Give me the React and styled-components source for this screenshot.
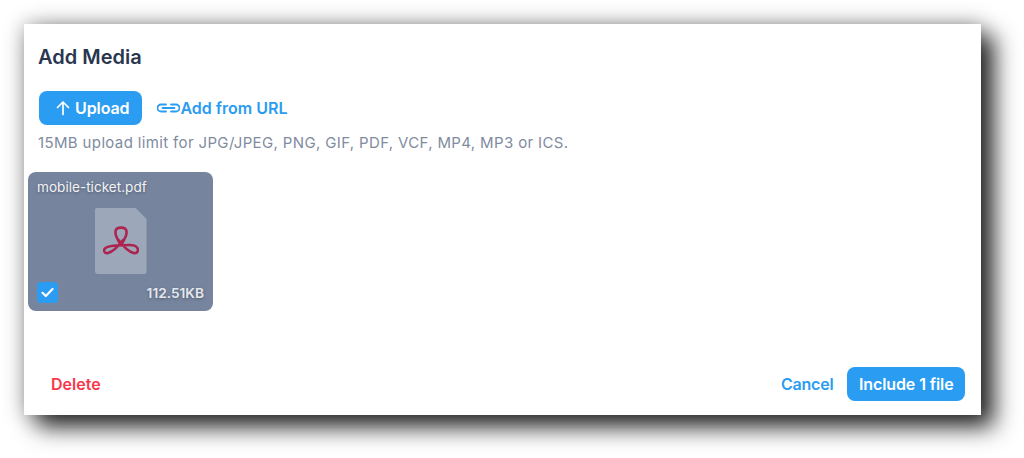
import React from "react";
import styled, { createGlobalStyle } from "styled-components";

const Global = createGlobalStyle`
  html, body { margin: 0; background: #fff; }
  body { font-family: Inter, "Liberation Sans", sans-serif; width: 1024px; height: 458px; overflow: hidden; }
`;
const Page = styled.div`
  box-sizing: border-box;
  width: 1024px;
  height: 458px;
  padding: 24px 43px 43px 24px;
`;
const Dialog = styled.div`
  box-sizing: border-box;
  width: 957px;
  height: 391px;
  background: #fff;
  box-shadow: 13px 12px 22px rgba(0,0,0,.82), 0 0 20px rgba(0,0,0,.32);
  display: flex;
  flex-direction: column;
  padding: 21px 16px 14px 4px;
`;
const Title = styled.h2`
  margin: 0 0 0 10px;
  font-size: 20px;
  line-height: 24px;
  font-weight: 600;
  color: #2a3650;
`;
const Actions = styled.div`
  display: flex;
  align-items: center;
  margin: 22px 0 0 11px;
  gap: 15px;
`;
const Primary = styled.button`
  border: 0;
  background: #2a9cf2;
  color: #fff;
  font: 600 16px Inter, sans-serif;
  letter-spacing: -0.1px;
  border-radius: 8px;
  height: 34px;
  padding: 0 ${p => p.$pr}px 0 ${p => p.$pl}px;
  display: flex;
  align-items: center;
  gap: 3px;
`;
const LinkBtn = styled.span`
  display: flex;
  align-items: center;
  color: #2a9cf2;
  font-size: 16px;
  font-weight: 600;
`;
const Hint = styled.p`
  margin: 8px 0 0 10px;
  font-size: 15px;
  line-height: 20px;
  letter-spacing: 0.36px;
  color: #7f8ba0;
`;
const Card = styled.div`
  box-sizing: border-box;
  width: 185px;
  height: 139px;
  margin-top: 19px;
  border-radius: 8px;
  background: #76849e;
  padding: 7px 9px 8px;
  display: flex;
  flex-direction: column;
  color: #f1f3f6;
`;
const FileName = styled.div`
  font-size: 13.6px;
  line-height: 17px;
  text-shadow: 0 1px 3px rgba(0,0,0,.3);
`;
const Doc = styled.div`
  align-self: center;
  margin-top: 12px;
  width: 52px;
  height: 66px;
  background: #9ca8ba;
  border-radius: 2px 2px 3px 3px;
  clip-path: polygon(0 0, 41px 0, 100% 11px, 100% 100%, 0 100%);
  display: flex;
  align-items: center;
  justify-content: center;
`;
const CardFoot = styled.div`
  margin-top: auto;
  display: flex;
  justify-content: space-between;
  align-items: center;
`;
const Check = styled.span`
  width: 21px;
  height: 21px;
  border-radius: 4px;
  background: #2a9cf2;
  display: flex;
  align-items: center;
  justify-content: center;
`;
const Size = styled.span`
  font-size: 13.7px;
  font-weight: 600;
  color: #e3e7ed;
  text-shadow: 0 1px 3px rgba(0,0,0,.3);
`;
const Footer = styled.div`
  margin-top: auto;
  display: flex;
  align-items: center;
  padding-left: 23px;
`;
const Danger = styled.span`
  color: #f8384a;
  font-size: 16px;
  font-weight: 600;
`;
const Cancel = styled.span`
  margin-left: auto;
  margin-right: 14px;
  color: #2a9cf2;
  font-size: 16px;
  font-weight: 600;
  letter-spacing: -0.2px;
`;

export default function App() {
  return (
    <Page>
      <Global />
      <Dialog>
        <Title>Add Media</Title>
        <Actions>
          <Primary $pl={15} $pr={13}>
            <svg width="18" height="18" viewBox="0 0 18 18" fill="none" stroke="#fff" strokeWidth="1.7" strokeLinecap="round" strokeLinejoin="round">
              <path d="M9 15.500V3M3.500 8.500 9 3l5.500 5.500" />
            </svg>
            Upload
          </Primary>
          <LinkBtn>
            <svg width="23" height="12" viewBox="0 0 23 12" fill="none" stroke="#2a9cf2" strokeWidth="1.800" strokeLinecap="round">
              <path d="M9 2.500H4a3.500 3.500 0 0 0 0 7h5M14 2.500h5a3.500 3.500 0 0 1 0 7h-5M5.500 6h12" />
            </svg>
            Add from URL
          </LinkBtn>
        </Actions>
        <Hint>15MB upload limit for JPG/JPEG, PNG, GIF, PDF, VCF, MP4, MP3 or ICS.</Hint>
        <Card>
          <FileName>mobile-ticket.pdf</FileName>
          <Doc>
            <svg width="36" height="30" viewBox="0 0 36 30" fill="none" stroke="#ad2450" strokeWidth="2.600" strokeLinejoin="round" strokeLinecap="round">
              <path d="M18 19C14 13 11.800 8.500 12.500 5 13.500 .5 22.500 .5 23.500 5 24.200 8.500 22 13 18 19Z" />
              <path d="M20 14C14 22 9 26 5 27 1 28 0 24 2.500 22 6 19.500 12 19 27 19c3 0 5.500 .5 7 2.500 2 2.500 .5 6.500-3.500 5.500-4-1-9-5-15-13" />
            </svg>
          </Doc>
          <CardFoot>
            <Check>
              <svg width="13" height="11" viewBox="0 0 13 11" fill="none" stroke="#fff" strokeWidth="2.200" strokeLinecap="round" strokeLinejoin="round">
                <path d="M1.500 5.800 4.800 9 11.500 2" />
              </svg>
            </Check>
            <Size>112.51KB</Size>
          </CardFoot>
        </Card>
        <Footer>
          <Danger>Delete</Danger>
          <Cancel>Cancel</Cancel>
          <Primary $pl={11.500} $pr={11.500}>Include 1 file</Primary>
        </Footer>
      </Dialog>
    </Page>
  );
}
